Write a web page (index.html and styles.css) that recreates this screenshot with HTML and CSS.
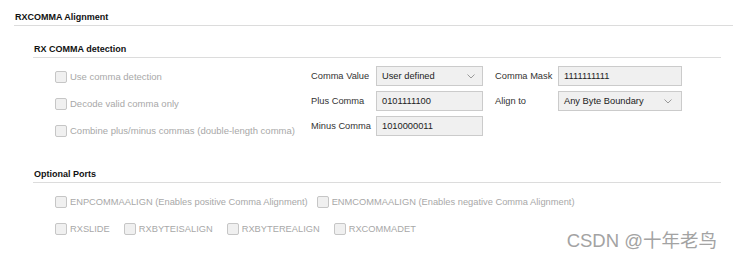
FILE: index.html
```html
<!DOCTYPE html>
<html lang="en">
<head>
    <meta charset="UTF-8">
    <meta name="viewport" content="width=device-width, initial-scale=1.0">
    <title>RXCOMMA Alignment</title>
    <link rel="stylesheet" href="styles.css">
</head>
<body>
    <div class="panel">
        <div class="main-head">RXCOMMA Alignment</div>

        <div class="group">
            <div class="group-head">RX COMMA detection</div>
            <div class="detect-body">
                <div class="check-col">
                    <label class="check"><span class="box"></span>Use comma detection</label>
                    <label class="check"><span class="box"></span>Decode valid comma only</label>
                    <label class="check"><span class="box"></span>Combine plus/minus commas (double-length comma)</label>
                </div>

                <div class="fields">
                    <span class="field-label">Comma Value</span>
                    <div class="control select">
                        <span>User defined</span>
                        <svg class="chevron" width="8" height="5" viewBox="0 0 8 5"><path d="M0.5 0.5 L4 4 L7.5 0.5" fill="none" stroke="#9a9a9a" stroke-width="1"/></svg>
                    </div>
                    <span class="field-label">Comma Mask</span>
                    <div class="control wide">1111111111</div>

                    <span class="field-label">Plus Comma</span>
                    <div class="control">0101111100</div>
                    <span class="field-label">Align to</span>
                    <div class="control select wide">
                        <span>Any Byte Boundary</span>
                        <svg class="chevron" width="8" height="5" viewBox="0 0 8 5"><path d="M0.5 0.5 L4 4 L7.5 0.5" fill="none" stroke="#9a9a9a" stroke-width="1"/></svg>
                    </div>

                    <span class="field-label">Minus Comma</span>
                    <div class="control">1010000011</div>
                </div>
            </div>
        </div>

        <div class="group ports">
            <div class="group-head">Optional Ports</div>
            <div class="ports-body">
                <div class="ports-row first">
                    <label class="check"><span class="box"></span>ENPCOMMAALIGN (Enables positive Comma Alignment)</label>
                    <label class="check"><span class="box"></span>ENMCOMMAALIGN (Enables negative Comma Alignment)</label>
                </div>
                <div class="ports-row">
                    <label class="check"><span class="box"></span>RXSLIDE</label>
                    <label class="check"><span class="box"></span>RXBYTEISALIGN</label>
                    <label class="check"><span class="box"></span>RXBYTEREALIGN</label>
                    <label class="check"><span class="box"></span>RXCOMMADET</label>
                </div>
            </div>
        </div>
    </div>

    <div class="watermark">CSDN @十年老鸟</div>
</body>
</html>
```

FILE: styles.css
```css
body {
    margin: 0;
    font-family: "Liberation Sans", Arial, sans-serif;
    font-size: 9.3px;
    color: #333;
    background-color: #fff;
    height: 256px;
    position: relative;
    overflow: hidden;
}

.main-head {
    margin-left: 14px;
    padding: 11px 0 2px 1px;
    line-height: 12px;
    font-size: 9px;
    font-weight: bold;
    color: #111;
    border-bottom: 1px solid #dcdcdc;
}

.group {
    margin: 17px 12px 0 33px;
}

.group.ports {
    margin-top: 24px;
}

.group-head {
    padding: 0 0 2px 1px;
    line-height: 12px;
    font-size: 9px;
    font-weight: bold;
    color: #111;
    border-bottom: 1px solid #dcdcdc;
}

.detect-body {
    display: flex;
    padding-top: 5px;
}

.check-col {
    display: flex;
    flex-direction: column;
    width: 256px;
    padding-left: 22px;
}

.check {
    display: flex;
    align-items: center;
    height: 27px;
    color: #a8a8a8;
    white-space: nowrap;
}

.check-col .check {
    font-size: 9.5px;
}

.box {
    width: 10px;
    height: 10px;
    margin-right: 3px;
    border: 1px solid #c6c6c6;
    border-radius: 2px;
    background-color: #f0f0f0;
}

.fields {
    display: grid;
    grid-template-columns: 65px 119px 63px 124px;
    grid-auto-rows: 20px;
    row-gap: 5px;
    padding-top: 3px;
    align-items: center;
}

.field-label {
    color: #333;
    white-space: nowrap;
}

.control {
    box-sizing: border-box;
    width: 107px;
    height: 20px;
    padding: 0 5px;
    display: flex;
    align-items: center;
    justify-content: space-between;
    color: #222;
    background-color: #f0f0f0;
    border: 1px solid #cbcbcb;
}

.control.wide {
    width: 124px;
}

.control.select {
    padding-right: 7px;
}

.control.select.wide {
    padding-right: 9px;
}

.ports-body {
    padding: 5px 0 0 22px;
}

.ports-row {
    display: flex;
    gap: 14px;
}

.ports-row.first {
    gap: 9px;
}

.watermark {
    position: absolute;
    right: 16px;
    bottom: 6px;
    line-height: 19px;
    font-family: "Liberation Sans", "Noto Sans CJK SC", sans-serif;
    font-size: 18.5px;
    color: #a3a3a3;
}
```
